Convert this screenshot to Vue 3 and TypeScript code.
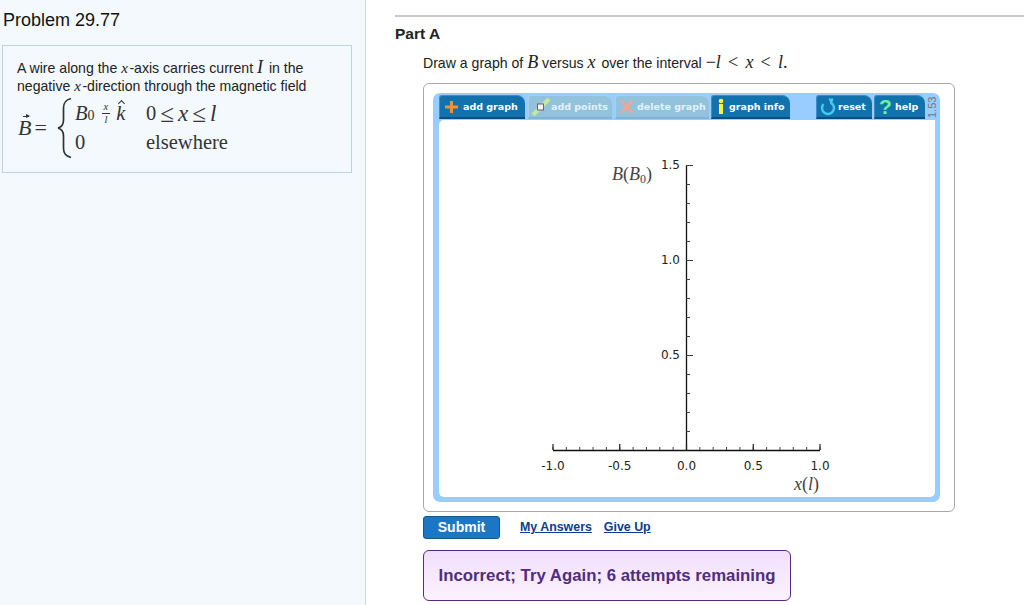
<script setup lang="ts">
const xMajor = [553, 619.75, 686.5, 753.25, 820]
const xMinor = Array.from({ length: 21 }, (_, i) => 553 + i * 13.35)
const yMinor = Array.from({ length: 15 }, (_, i) => 165.5 + i * 19)
const xLabels = ['-1.0', '-0.5', '0.0', '0.5', '1.0']
const yLabels = [
  { t: '1.5', y: 169 },
  { t: '1.0', y: 264 },
  { t: '0.5', y: 359 },
]
const ox = 439
const oy = 120
</script>

<template>
  <div class="page">
    <aside class="side">
      <h1 class="title">Problem 29.77</h1>
      <div class="problem">
        <p class="ptext">A wire along the <i class="m">x</i>-axis carries current <i class="m big">I</i> in the<br />negative <i class="m">x</i>-direction through the magnetic field</p>
        <div class="eq">
          <span class="lhs"><span class="vec">B</span><span class="eqs">=</span></span>
          <svg class="brace" width="20" height="62" viewBox="0 0 20 62">
            <path d="M15 1.5 C9 3 7.5 6 7.5 11 L7.5 23 C7.5 27 6 30 2 31 C6 32 7.5 35 7.5 39 L7.5 51 C7.5 56 9 59 15 60.5" fill="none" stroke="#333" stroke-width="1.7" />
          </svg>
          <div class="cases">
            <span class="c1"><i>B</i><sub>0</sub><span class="frac"><i>x</i><i class="den">l</i></span><span class="khat"><i>k</i></span></span>
            <span class="c2">0<span class="le">≤</span><i>x</i><span class="le">≤</span><i>l</i></span>
            <span class="c1">0</span>
            <span class="c2">elsewhere</span>
          </div>
        </div>
      </div>
    </aside>

    <main class="main">
      <h2 class="part">Part A</h2>
      <div class="inner">
        <p class="ask">Draw a graph of <i class="m b">B</i> versus <i class="m b wide">x</i> over the interval <span class="m b sp">−<i>l</i> &lt; <i>x</i> &lt; <i>l</i>.</span></p>
        <div class="tool">
          <div class="panel">
            <div class="toolbar">
              <button class="btn w-add">
                <svg width="18" height="16" viewBox="0 0 18 16"><path d="M7 2h3v4.500h5v3h-5v4.500H7V9.500H2v-3h5z" fill="#f6922e" /></svg>add graph
              </button>
              <button class="btn off w-pts">
                <svg width="20" height="18" viewBox="0 0 20 18"><path d="M2 17 L18 1" stroke="#c5e89a" stroke-width="4" /><rect x="6.500" y="6" width="6" height="6" fill="#f4f4f4" stroke="#666" /></svg>add points
              </button>
              <button class="btn off w-del">
                <svg width="16" height="16" viewBox="0 0 16 16"><path d="M2.500 2 L13.500 14 M13.500 2 L2.500 14" stroke="#eda796" stroke-width="3" /></svg>delete graph
              </button>
              <button class="btn w-inf">
                <svg width="10" height="18" viewBox="0 0 10 18"><rect x="3" y="6" width="4" height="10" fill="#fdf23a" /><circle cx="5" cy="3" r="2.300" fill="#fdf23a" /></svg>graph info
              </button>
              <span class="spacer"></span>
              <button class="btn w-res">
                <svg width="16" height="18" viewBox="0 0 16 18"><path d="M10.500 4.500 A6 6 0 1 1 3.500 6" fill="none" stroke="#43cdf0" stroke-width="2.400" /><path d="M8.500 0.500 L13.500 0.500 L11.500 7.500 Z" fill="#43cdf0" /></svg>reset
              </button>
              <button class="btn w-hlp"><span class="q">?</span>help</button>
              <span class="ver">1.53</span>
            </div>
            <svg class="plot" width="496" height="377" viewBox="0 0 496 377">
              <g :transform="`translate(${-ox} ${-oy})`">
                <path d="M686.5 165.500 V450.500 M553 450.500 H820" stroke="#111" stroke-width="1.300" fill="none" />
                <path d="M686.500 165.500 H693 M686.500 260.500 H693 M686.500 355.500 H693" stroke="#333" stroke-width="1.200" />
                <line v-for="y in yMinor" :key="y" x1="686.500" x2="690" :y1="y" :y2="y" stroke="#444" stroke-width="1" />
                <line v-for="x in xMinor" :key="x" :x1="x" :x2="x" y1="450" y2="447" stroke="#444" stroke-width="1" />
                <line v-for="x in xMajor" :key="x" :x1="x" :x2="x" y1="450" y2="444" stroke="#222" stroke-width="1.200" />
                <text v-for="(t, i) in xLabels" :key="t" :x="xMajor[i]" y="470" text-anchor="middle" class="lab">{{ t }}</text>
                <text v-for="l in yLabels" :key="l.t" x="680" :y="l.y" text-anchor="end" class="lab">{{ l.t }}</text>
                <text x="612" y="180" class="mlab"><tspan font-style="italic">B</tspan>(<tspan font-style="italic">B</tspan><tspan font-size="12" dy="3">0</tspan><tspan dy="-3">)</tspan></text>
                <text x="794" y="490" class="mlab"><tspan font-style="italic">x</tspan>(<tspan font-style="italic">l</tspan>)</text>
              </g>
            </svg>
          </div>
        </div>
        <div class="actions">
          <button class="submit">Submit</button>
          <a class="link" href="#">My Answers</a>
          <a class="link" href="#">Give Up</a>
        </div>
        <div class="alert">Incorrect; Try Again; 6 attempts remaining</div>
      </div>
    </main>
  </div>
</template>

<style>
html, body { margin: 0; background: #fff; }
</style>

<style scoped>
.page { display: flex; width: 1024px; height: 605px; overflow: hidden; font-family: "Liberation Sans", Arial, sans-serif; color: #222; }
.side { width: 365px; flex: none; background: #f4f9fe; border-right: 1px solid #c6d6e6; box-sizing: content-box; padding-top: 9px; }
.title { margin: 0 0 0 3px; font-size: 18px; line-height: 22px; font-weight: 400; color: #111; }
.problem { box-sizing: border-box; margin: 14px 0 0 2px; width: 350px; height: 128px; border: 1px solid #bcd3e6; padding: 12px 0 0 14px; }
.ptext { margin: 0; font-size: 14.100px; line-height: 18px; color: #222; }
.m { font-family: "Liberation Serif", "Times New Roman", serif; font-style: italic; }
.ptext .m { font-size: 15px; line-height: 1; letter-spacing: 1.500px; }
.ptext .big { font-size: 18px; letter-spacing: 0; margin-right: 2px; }
.b { font-size: 18px; line-height: 1; }
.wide { letter-spacing: 2px; }
.sp { word-spacing: 2.700px; font-style: normal; }
.b i { font-style: italic; }
.eq { display: flex; align-items: center; margin-top: 2px; font-family: "Liberation Serif", serif; font-size: 20.500px; color: #333; }
.lhs { display: flex; align-items: center; flex: none; width: 47px; font-size: 22px; margin-left: 1px; }
.vec { font-style: italic; position: relative; }
.vec::before { content: ""; position: absolute; left: 5px; right: 2px; top: 1px; height: 1px; background: #333; }
.vec::after { content: ""; position: absolute; right: 1px; top: -1px; border-left: 4px solid #333; border-top: 2.500px solid transparent; border-bottom: 2.500px solid transparent; }
.eqs { margin-left: 3px; }
.brace { flex: none; margin-left: -9px; }
.cases { display: grid; grid-template-columns: 71px auto; grid-auto-rows: 29px; align-items: center; margin-left: -1px; }
.c1 { display: flex; align-items: center; }
.c1 sub { font-size: 14px; line-height: 1; align-self: flex-end; margin-bottom: 3px; }
.frac { display: inline-flex; flex-direction: column; align-items: center; font-size: 10.500px; line-height: 12px; margin: 0 6px 0 7px; }
.frac i { display: block; }
.frac i:first-child { border-bottom: 1px solid #333; padding: 0 2px; }
.khat { position: relative; font-style: italic; }
.khat::before { content: ""; position: absolute; left: 3px; top: -1px; width: 4px; height: 4px; border-left: 1px solid #333; border-top: 1px solid #333; transform: rotate(45deg); }
.c2 { display: flex; align-items: center; }
.c2 i { font-size: 23px; }
.le { margin: 0 4px; font-size: 25px; line-height: 1; }
.main { flex: 1; min-width: 0; margin: 15px 0 0 29px; border-top: 2px solid #c8c8c8; }
.part { margin: 8px 0 0; font-size: 15.500px; line-height: 18px; font-weight: 700; color: #222; }
.inner { margin-left: 28px; width: 532px; }
.ask { margin: 10px 0 0; font-size: 14.100px; line-height: 20px; color: #222; white-space: nowrap; }
.tool { box-sizing: border-box; margin-top: 10px; height: 429px; border: 1px solid #a8a8a8; border-radius: 6px; padding: 9px 14px 9px 9px; background: #fff; }
.panel { height: 409px; background: #99ccff; border-radius: 7px; padding: 2px 5px 5px 6px; box-sizing: border-box; }
.toolbar { display: flex; gap: 3px; height: 25px; align-items: flex-start; }
.btn { box-sizing: border-box; height: 24px; flex: none; display: flex; align-items: center; gap: 2px; padding: 0 0 0 3px; background: #1272ae; border: 0; border-bottom: 2px solid #0b4f80; border-left: 1px solid #3a8fc4; border-top: 1px solid #3a8fc4; border-radius: 3px 8px 0 0; color: #fff; font: 700 9.500px "DejaVu Sans", Verdana, sans-serif; white-space: nowrap; }
.btn svg { flex: none; }
.off { background: #93c3dc; border-bottom-color: #7fb4d3; border-left-color: #a8d0ea; border-top-color: #a8d0ea; color: #e4f1f8; }
.w-add { width: 86px; }
.w-pts { width: 84px; padding-left: 2px; gap: 0; }
.w-del { width: 94px; }
.w-inf { width: 79px; margin-left: -1px; padding-left: 4px; gap: 3px; }
.w-res { width: 56px; }
.w-hlp { width: 51px; margin-left: -1px; padding-left: 4px; gap: 3px; }
.spacer { width: 20px; flex: none; }
.q { font: 700 21px/1 "Liberation Sans", sans-serif; color: #6cf0a0; width: 13px; text-align: center; }
.ver { font-size: 11px; color: #777; writing-mode: vertical-rl; transform: rotate(180deg); height: 24px; line-height: 11px; margin-left: -1px; text-align: center; }
.plot { display: block; background: #fff; border-radius: 5px 0 5px 5px; }
.lab { font: 12px "DejaVu Sans", Verdana, sans-serif; fill: #222; }
.mlab { font: 18px "Liberation Serif", serif; fill: #444; }
.actions { display: flex; align-items: center; margin-top: 3px; height: 24px; }
.submit { box-sizing: border-box; width: 77px; height: 23px; background: #1b77c5; border: 1px solid #12598f; border-radius: 3px; color: #fff; font: 700 14px "Liberation Sans", sans-serif; padding: 0; margin-right: 20px; }
.link { color: #0b3d91; font-size: 12.400px; font-weight: 700; text-decoration: underline; margin-right: 12px; }
.alert { box-sizing: border-box; margin-top: 11px; width: 368px; height: 51px; display: flex; align-items: center; justify-content: center; border: 1px solid #5c2a86; border-radius: 6px; background: linear-gradient(#f2dffb, #fcf2ff); color: #4f2d7f; font-size: 16.800px; font-weight: 700; }
</style>
